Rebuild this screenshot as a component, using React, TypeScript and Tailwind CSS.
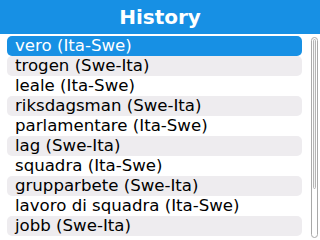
const items = [
  "vero (Ita-Swe)",
  "trogen (Swe-Ita)",
  "leale (Ita-Swe)",
  "riksdagsman (Swe-Ita)",
  "parlamentare (Ita-Swe)",
  "lag (Swe-Ita)",
  "squadra (Ita-Swe)",
  "grupparbete (Swe-Ita)",
  "lavoro di squadra (Ita-Swe)",
  "jobb (Swe-Ita)",
];

export default function App() {
  const selected = 0;

  return (
    <div
      className="w-[320px] h-[240px] bg-white overflow-hidden flex flex-col"
      style={{ fontFamily: '"DejaVu Sans", Verdana, sans-serif' }}
    >
      <div className="h-[34px] bg-[#1790e4] flex items-center justify-center shrink-0">
        <span className="text-white font-bold text-[20px] leading-none">History</span>
      </div>

      <div className="flex flex-1 pt-[2px]">
        <ul className="flex-1 pl-[7px] pr-[9px]">
          {items.map((item, i) => {
            const isSel = i === selected;
            const striped = i % 2 === 1;
            return (
              <li
                key={item}
                className={`h-[20px] rounded-[5px] pl-[8px] flex items-center text-[16.6px] leading-none whitespace-nowrap ${
                  isSel
                    ? "bg-[#1790e4] text-white"
                    : striped
                      ? "bg-[#eeecef] text-black"
                      : "text-black"
                }`}
              >
                {item}
              </li>
            );
          })}
        </ul>

        {/* scrollbar */}
        <div className="w-[7px] mr-[2px] mt-[1px] mb-[2px] border border-[#a9a9a9] rounded-full p-[1px] flex flex-col">
          <div className="h-[150px] border border-[#b5b5b5] rounded-full bg-[#f4f4f4]" />
        </div>
      </div>
    </div>
  );
}
